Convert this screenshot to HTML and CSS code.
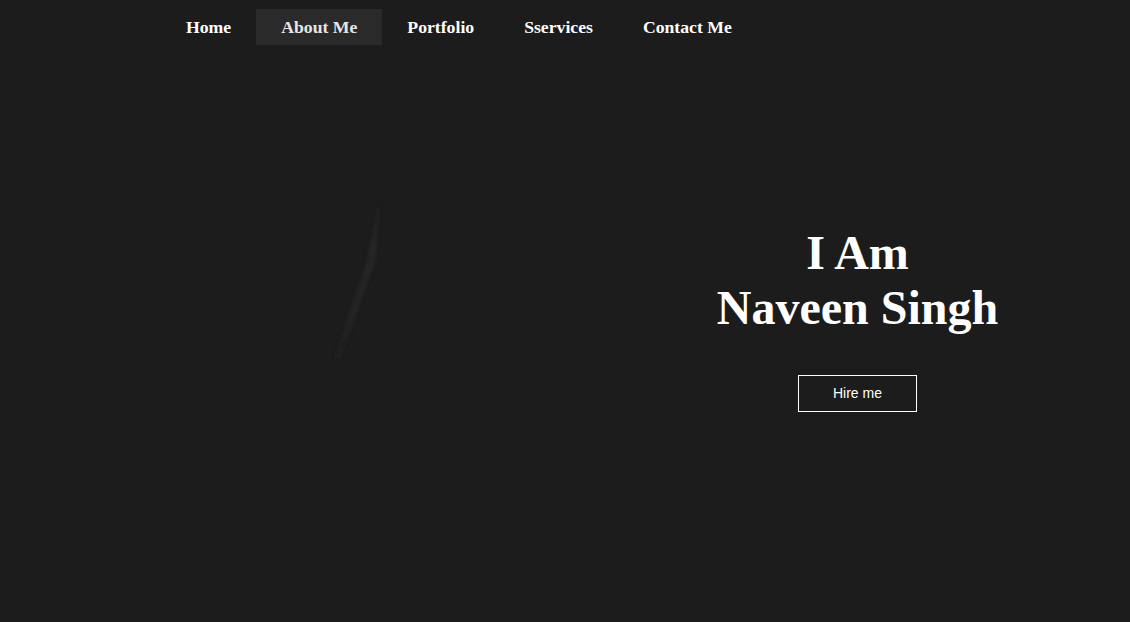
FILE: index.html
```html
<!DOCTYPE html>
<html lang="en">
<head>
<meta charset="utf-8">
<title>Naveen Singh</title>
<link rel="stylesheet" href="styles.css">
</head>
<body>
<header class="site-header">
  <nav>
    <ul class="nav-list">
      <li><a href="#" class="nav-link">Home</a></li>
      <li><a href="#" class="nav-link active">About Me</a></li>
      <li><a href="#" class="nav-link">Portfolio</a></li>
      <li><a href="#" class="nav-link">Sservices</a></li>
      <li><a href="#" class="nav-link">Contact Me</a></li>
    </ul>
  </nav>
</header>
<main class="hero">
  <div class="hero-left">
    <svg class="streak" width="585" height="400" viewBox="0 0 585 400" aria-hidden="true">
      <defs>
        <linearGradient id="sg" x1="0" y1="0" x2="0" y2="1">
          <stop offset="0" stop-color="#2a2a2a" stop-opacity="0"/>
          <stop offset="0.3" stop-color="#292929" stop-opacity="0.85"/>
          <stop offset="0.7" stop-color="#272727" stop-opacity="0.75"/>
          <stop offset="1" stop-color="#252525" stop-opacity="0"/>
        </linearGradient>
        <filter id="bl" x="-50%" y="-10%" width="200%" height="120%">
          <feGaussianBlur stdDeviation="2"/>
        </filter>
      </defs>
      <path d="M381 0 L368 70 L331 175 L339 175 L375 70 Z" fill="url(#sg)" filter="url(#bl)"/>
    </svg>
  </div>
  <div class="hero-right">
    <h1 class="hero-title">I Am<br>Naveen Singh</h1>
    <a href="#" class="hire-btn">Hire me</a>
  </div>
</main>
</body>
</html>
```
FILE: styles.css
```css
html, body {
  margin: 0;
  padding: 0;
}
body {
  background: #1c1c1c;
  color: #ffffff;
  font-family: "Liberation Serif", "Times New Roman", serif;
  width: 1130px;
  height: 622px;
  overflow: hidden;
}
.site-header {
  padding-top: 9px;
}
.nav-list {
  list-style: none;
  margin: 0 0 0 161px;
  padding: 0;
  display: flex;
}
.nav-link {
  display: block;
  padding: 8px 25px;
  font-size: 17.7px;
  line-height: 20px;
  font-weight: bold;
  color: #ffffff;
  text-decoration: none;
}
.nav-link.active {
  background: #2a2a2a;
  color: #e6e6e6;
}
.hero {
  display: flex;
}
.hero-left {
  width: 585px;
  height: 400px;
  flex: none;
}
.streak {
  display: block;
  margin-top: 145px;
}
.hero-right {
  flex: 1;
  display: flex;
  flex-direction: column;
  align-items: center;
  padding-top: 180px;
}
.hero-title {
  margin: 0;
  font-size: 48px;
  line-height: 55px;
  font-weight: bold;
  text-align: center;
  color: #ffffff;
}
.hire-btn {
  margin-top: 40px;
  display: block;
  width: 117px;
  box-sizing: content-box;
  padding: 10px 0;
  border: 1px solid #ffffff;
  text-align: center;
  font-family: "Liberation Sans", Arial, sans-serif;
  font-size: 14px;
  line-height: 15px;
  color: #ffffff;
  text-decoration: none;
}
```
